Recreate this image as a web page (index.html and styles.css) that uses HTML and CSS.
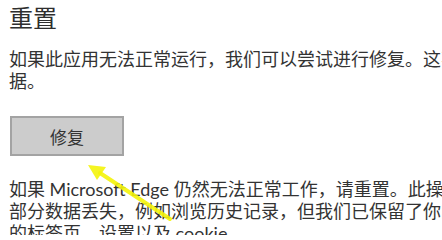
FILE: index.html
```html
<!DOCTYPE html>
<html lang="zh-CN">
<head>
<meta charset="utf-8">
<title>重置</title>
<link rel="stylesheet" href="styles.css">
</head>
<body>
<main class="page">
  <h1 class="title">重置</h1>
  <p class="text">
    <span class="line">如果此应用无法正常运行，我们可以尝试进行修复。这不会影响应用的数</span>
    <span class="line">据。</span>
  </p>
  <button class="btn" type="button">修复</button>
  <p class="text text-reset">
    <span class="line">如果 Microsoft Edge 仍然无法正常工作，请重置。此操作可能会导致</span>
    <span class="line">部分数据丢失，例如浏览历史记录，但我们已保留了你的收藏夹、打开</span>
    <span class="line">的标签页、设置以及 cookie。</span>
  </p>
  <svg class="arrow" width="442" height="235" viewBox="0 0 442 235" aria-hidden="true">
    <line x1="100" y1="173" x2="170" y2="219" stroke="#f4f40a" stroke-width="4" stroke-linecap="round" opacity="0.9"/>
    <polygon points="88,165 97,180 106,167" fill="#f4f40a" opacity="0.9"/>
  </svg>
</main>
</body>
</html>
```
FILE: styles.css
```css
html, body {
  margin: 0;
  padding: 0;
  background: #ffffff;
  overflow: hidden;
}
.page {
  position: relative;
  width: 442px;
  height: 235px;
  overflow: hidden;
  padding-left: 9px;
  box-sizing: border-box;
  font-family: Lato, "Noto Sans CJK SC", sans-serif;
  color: #333333;
}
.title {
  margin: 0;
  padding-top: 2px;
  font-family: "Noto Sans CJK SC", sans-serif;
  font-size: 24px;
  font-weight: 400;
  line-height: 30px;
  color: #2e2e2e;
}
.text {
  margin: 16px 0 0 0;
  font-size: 18px;
  line-height: 22px;
}
.line {
  display: block;
  white-space: nowrap;
}
.btn {
  display: block;
  margin: 24px 0 0 1px;
  width: 114px;
  height: 40px;
  background: #cccccc;
  border: 2px solid #a3a3a3;
  font-family: "Noto Sans CJK SC", sans-serif;
  font-size: 17px;
  color: #333333;
  padding: 0;
}
.text-reset {
  margin-top: 22px;
}
.arrow {
  position: absolute;
  left: 0;
  top: 0;
  pointer-events: none;
}
```
